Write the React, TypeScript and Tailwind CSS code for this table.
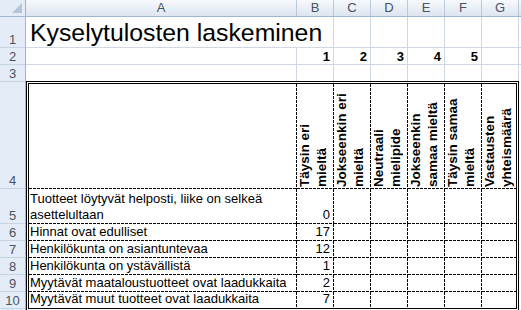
export default function App() {
  const rowHeads = [
    { n: '1', h: 'h-[31px]' },
    { n: '2', h: 'h-[17px]' },
    { n: '3', h: 'h-[17px]' },
    { n: '4', h: 'h-[107px]' },
    { n: '5', h: 'h-[35px]' },
    { n: '6', h: 'h-[17px]' },
    { n: '7', h: 'h-[17px]' },
    { n: '8', h: 'h-[17px]' },
    { n: '9', h: 'h-[17px]' },
    { n: '10', h: 'h-[17px]' },
  ]

  const letters = ['B', 'C', 'D', 'E', 'F', 'G']

  // dashed cell edges, drawn like Excel's 3-on-1-off dash
  const dRB =
    'bg-no-repeat [background-image:repeating-linear-gradient(to_bottom,#000_0_3px,transparent_3px_4px),repeating-linear-gradient(to_right,#000_0_3px,transparent_3px_4px)] [background-size:1px_100%,100%_1px] [background-position:right_top,left_bottom]'
  const dB =
    'bg-no-repeat [background-image:repeating-linear-gradient(to_right,#000_0_3px,transparent_3px_4px)] [background-size:100%_1px] [background-position:left_bottom]'
  const dR =
    'bg-no-repeat [background-image:repeating-linear-gradient(to_bottom,#000_0_3px,transparent_3px_4px)] [background-size:1px_100%] [background-position:right_top]'

  const headers = [
    ['Täysin eri', 'mieltä'],
    ['Jokseenkin eri', 'mieltä'],
    ['Neutraali', 'mielipide'],
    ['Jokseenkin', 'samaa mieltä'],
    ['Täysin samaa', 'mieltä'],
    ['Vastausten', 'yhteismäärä'],
  ]

  const rows = [
    { label: ['Tuotteet löytyvät helposti, liike on selkeä', 'asettelultaan'], value: '0' },
    { label: ['Hinnat ovat edulliset'], value: '17' },
    { label: ['Henkilökunta on asiantuntevaa'], value: '12' },
    { label: ['Henkilökunta on ystävällistä'], value: '1' },
    { label: ['Myytävät maataloustuotteet ovat laadukkaita'], value: '2' },
    { label: ['Myytävät muut tuotteet ovat laadukkaita'], value: '7' },
  ]

  return (
    <div className="w-[521px] h-[310px] overflow-hidden bg-white font-['Liberation_Sans',Arial,sans-serif] text-black">
      {/* column headers */}
      <div className="flex h-[17px] border-b border-[#9eb6ce] bg-[linear-gradient(to_bottom,#f6f9fc,#dde5f0)]">
        <div className="relative w-[26px] shrink-0 border-r border-[#9eb6ce] bg-[#e4ecf7]">
          <svg className="absolute right-[3px] bottom-[3px]" width="10" height="10" viewBox="0 0 10 10">
            <polygon points="10,0 10,10 0,10" fill="#b6c6d9" />
          </svg>
        </div>
        <div className="w-[271px] shrink-0 border-r border-[#b9c9da] text-center text-[13px] leading-[16px] text-[#4a5360]">A</div>
        {letters.map((l) => (
          <div key={l} className="w-[37px] shrink-0 border-r border-[#b9c9da] text-center text-[13px] leading-[16px] text-[#4a5360]">
            {l}
          </div>
        ))}
        <div className="flex-1" />
      </div>

      <div className="flex">
        {/* row headers */}
        <div className="flex w-[26px] shrink-0 flex-col border-r border-[#9eb6ce] bg-[#e4ecf7]">
          {rowHeads.map((r) => (
            <div key={r.n} className={`${r.h} flex items-end justify-center border-b border-[#c5d3e3] text-[13px] leading-[15px] text-[#4a5360]`}>
              {r.n}
            </div>
          ))}
          <div className="h-[10px]" />
        </div>

        <div className="flex flex-1 flex-col">
          {/* row 1 */}
          <div className="flex h-[31px]">
            <div className="flex w-[308px] shrink-0 items-end border-b border-r border-[#d0d7e5] pl-[4px] text-[24.8px] leading-[28px] whitespace-nowrap">
              Kyselytulosten laskeminen
            </div>
            {letters.slice(1).map((l) => (
              <div key={l} className="w-[37px] shrink-0 border-b border-r border-[#d0d7e5]" />
            ))}
            <div className="flex-1 border-b border-[#d0d7e5]" />
          </div>
          {/* row 2 */}
          <div className="flex h-[17px]">
            <div className="w-[271px] shrink-0 border-b border-r border-[#d0d7e5]" />
            {letters.map((l, i) => (
              <div key={l} className="flex w-[37px] shrink-0 items-end justify-end border-b border-r border-[#d0d7e5] pr-[3px] text-[13px] leading-[15px] font-bold">
                {i < 5 ? String(i + 1) : ''}
              </div>
            ))}
            <div className="flex-1 border-b border-[#d0d7e5]" />
          </div>
          {/* row 3 */}
          <div className="flex h-[16px]">
            <div className="w-[271px] shrink-0 border-r border-[#d0d7e5]" />
            {letters.map((l) => (
              <div key={l} className="w-[37px] shrink-0 border-r border-[#d0d7e5]" />
            ))}
            <div className="flex-1" />
          </div>

          {/* table */}
          <div className="w-[493px] border-[3px] border-double border-black">
            <div className="grid grid-cols-[268px_37px_37px_37px_37px_37px_34px] grid-rows-[105px_35px_17px_17px_17px_17px_16px] text-[13px]">
              <div className={dRB} />
              {headers.map((h, i) => (
                <div key={i} className={i < 5 ? `${dRB} flex` : `${dB} flex`}>
                  <div className="h-full w-full rotate-180 pt-[2px] text-[13.5px] font-bold leading-[16.5px] whitespace-nowrap [writing-mode:vertical-rl]">
                    {h[0]}
                    <br />
                    {h[1]}
                  </div>
                </div>
              ))}

              {rows.map((r, ri) => {
                const last = ri === rows.length - 1
                return [
                  <div key={`a${ri}`} className={`${last ? dR : dRB} flex items-end pl-[1px] pb-[1px] leading-[16px] whitespace-nowrap`}>
                    <div>
                      {r.label.map((t, k) => (
                        <div key={k}>{t}</div>
                      ))}
                    </div>
                  </div>,
                  <div key={`b${ri}`} className={`${last ? dR : dRB} flex items-end justify-end pr-[4px] pb-[1px] leading-[16px]`}>
                    {r.value}
                  </div>,
                  ...[0, 1, 2, 3].map((c) => <div key={`c${ri}${c}`} className={last ? dR : dRB} />),
                  <div key={`g${ri}`} className={last ? '' : dB} />,
                ]
              })}
            </div>
          </div>
        </div>
      </div>
    </div>
  )
}
